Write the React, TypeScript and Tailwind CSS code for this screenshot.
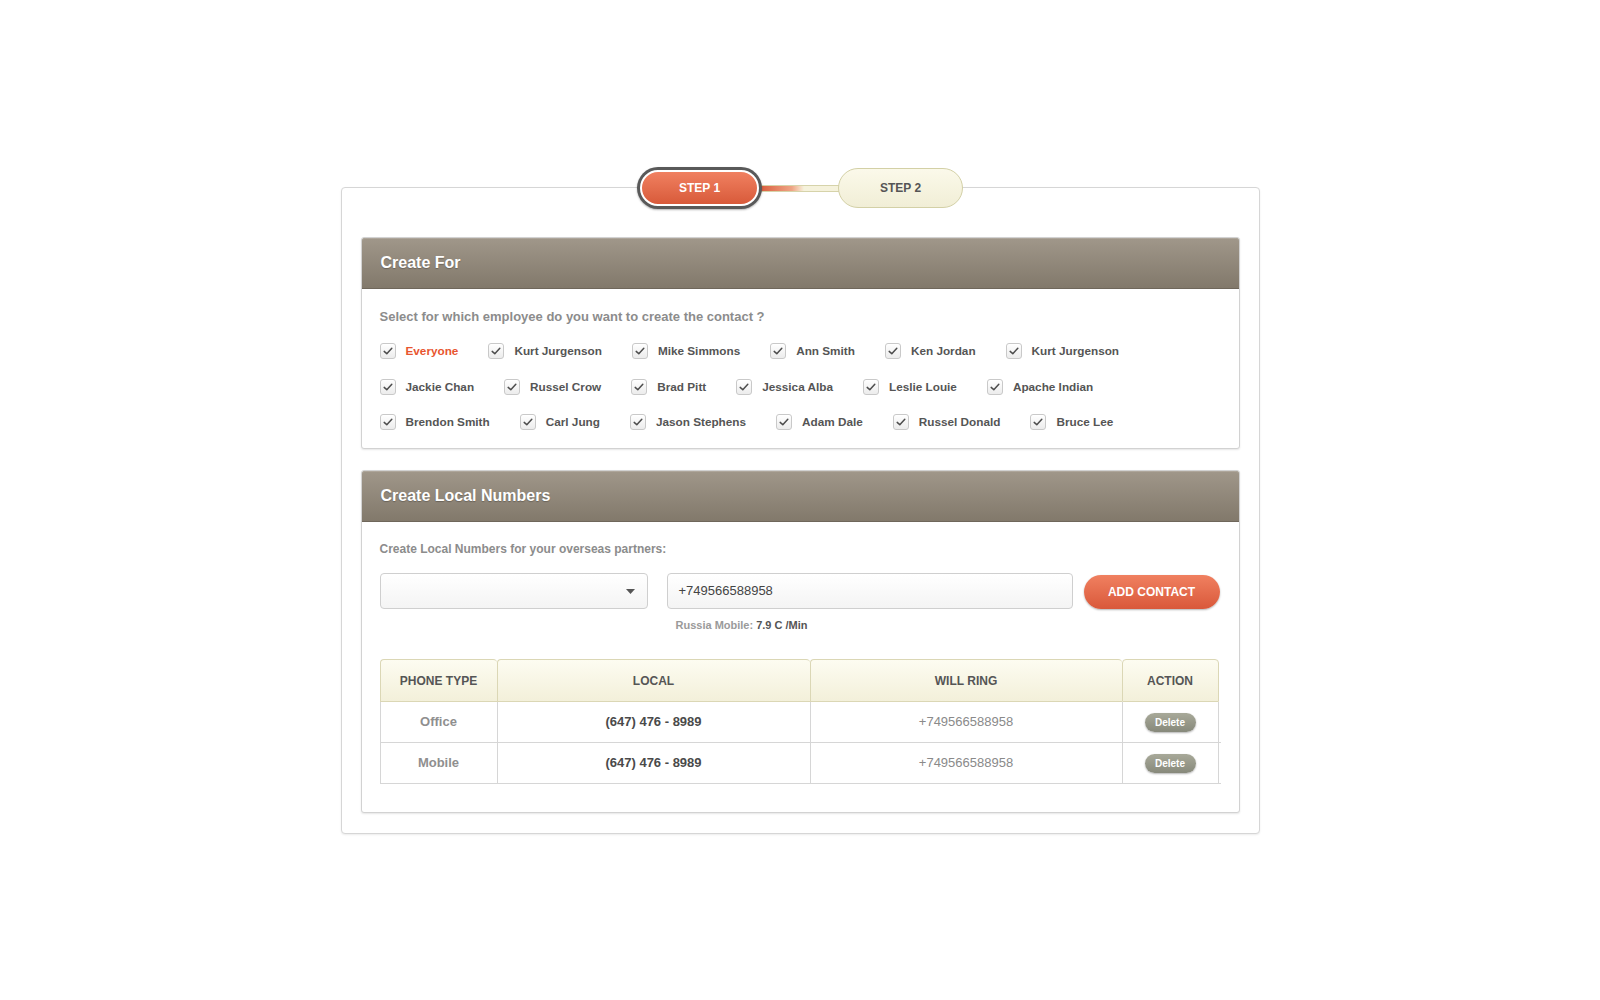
const rows = [
  ['Everyone', 'Kurt Jurgenson', 'Mike Simmons', 'Ann Smith', 'Ken Jordan', 'Kurt Jurgenson'],
  ['Jackie Chan', 'Russel Crow', 'Brad Pitt', 'Jessica Alba', 'Leslie Louie', 'Apache Indian'],
  ['Brendon Smith', 'Carl Jung', 'Jason Stephens', 'Adam Dale', 'Russel Donald', 'Bruce Lee'],
];

const numbers = [
  { type: 'Office', local: '(647) 476 - 8989', ring: '+749566588958' },
  { type: 'Mobile', local: '(647) 476 - 8989', ring: '+749566588958' },
];

function Check() {
  return (
    <span className="flex h-4 w-4 items-center justify-center rounded-[3px] border border-[#c9c9c9] bg-gradient-to-b from-white to-[#ececec] shadow-[inset_0_1px_0_#fff]">
      <svg width="12" height="12" viewBox="0 0 12 12" fill="none">
        <path d="M2.2 6.4 L4.8 8.8 L9.8 3.2" stroke="#4d4d4d" strokeWidth="1.5" strokeLinecap="round" strokeLinejoin="round" />
      </svg>
    </span>
  );
}

function PanelHeader({ title }: { title: string }) {
  return (
    <div className="flex h-[51px] items-center rounded-t-[3px] border-b border-[#6f675b] bg-[#8f8676] bg-gradient-to-b from-[#a0978a] to-[#82796b] px-[19px] shadow-[inset_0_1px_0_rgba(255,255,255,0.15)]">
      <h3 className="text-[16px] font-bold text-white [text-shadow:0_1px_1px_rgba(0,0,0,0.25)]">{title}</h3>
    </div>
  );
}

function Steps() {
  return (
    <div className="absolute left-1/2 top-[-21px] flex -translate-x-1/2 items-center">
      <div className="z-10 h-[42px] w-[125px] rounded-full bg-[#595959] p-[3px] shadow-[0_1px_2px_rgba(0,0,0,0.3)]">
        <div className="flex h-full w-full items-center justify-center rounded-full border-2 border-white bg-gradient-to-b from-[#f08060] to-[#d85a3a] text-[12px] font-bold text-white">
          STEP 1
        </div>
      </div>
      <div className="-mx-[2px] h-[7px] w-[80px] border-y border-[#d6d3aa] bg-gradient-to-r from-[#d95b3b] via-[#eea585] via-40% to-[#f5f2dc] to-55%" />
      <div className="z-10 flex h-[40px] w-[125px] items-center justify-center rounded-full border border-[#d3d0a6] bg-gradient-to-b from-[#fbf9ea] to-[#f1eed6] text-[12px] font-bold text-[#555]">
        STEP 2
      </div>
    </div>
  );
}

export default function App() {
  return (
    <div className="min-h-[1000px] bg-white pt-[187px] font-['Liberation_Sans',Arial,sans-serif]">
      <div className="relative mx-auto w-[919px] rounded-[4px] border border-[#d6d6d6] bg-white px-[19px] pb-[20px] pt-[49px] shadow-[0_1px_2px_rgba(0,0,0,0.08)]">
        <Steps />

        {/* employees */}
        <section className="rounded-[3px] border border-[#d2d2d2] bg-white shadow-[0_1px_2px_rgba(0,0,0,0.1)]">
          <PanelHeader title="Create For" />
          <div className="px-[18px] pb-[18px] pt-[20px]">
            <p className="text-[13px] leading-4 font-bold text-[#8c8c8c]">
              Select for which employee do you want to create the contact ?
            </p>
            <div className="mt-[18px] flex flex-col gap-[19.5px]">
              {rows.map((row, i) => (
                <div key={i} className="flex h-4 items-center gap-[30px]">
                  {row.map((name, j) => (
                    <label key={name + j} className="flex items-center gap-[10px]">
                      <Check />
                      <span
                        className={
                          'text-[11.75px] font-bold ' + (i === 0 && j === 0 ? 'text-[#e8552f]' : 'text-[#555]')
                        }
                      >
                        {name}
                      </span>
                    </label>
                  ))}
                </div>
              ))}
            </div>
          </div>
        </section>

        {/* local numbers */}
        <section className="mt-[21px] rounded-[3px] border border-[#d2d2d2] bg-white shadow-[0_1px_2px_rgba(0,0,0,0.1)]">
          <PanelHeader title="Create Local Numbers" />
          <div className="px-[18px] pb-[28px] pt-[19px]">
            <p className="text-[12px] leading-4 font-bold text-[#8c8c8c]">
              Create Local Numbers for your overseas partners:
            </p>
            <div className="mt-4 flex items-start">
              <div className="flex h-[36px] w-[268px] items-center justify-end rounded-[4px] border border-[#cfcfcf] bg-gradient-to-b from-white to-[#f4f4f4] pr-[12px]">
                <svg width="9" height="5" viewBox="0 0 9 5">
                  <path d="M0 0 H9 L4.5 5 Z" fill="#555" />
                </svg>
              </div>
              <div className="ml-[19px] w-[406px]">
                <div className="flex h-[36px] items-center rounded-[4px] border border-[#cfcfcf] bg-gradient-to-b from-white to-[#f4f4f4] px-[11px] text-[13px] text-[#444]">
                  +749566588958
                </div>
                <p className="mt-[9px] pl-[9px] text-[11px] leading-[14px] font-bold text-[#9a9a9a]">
                  Russia Mobile: <span className="text-[#555]">7.9 C /Min</span>
                </p>
              </div>
              <button className="ml-[11px] mt-[2px] h-[34px] w-[136px] rounded-full bg-gradient-to-b from-[#f08060] to-[#d9583a] text-[12px] font-bold text-white shadow-[0_1px_2px_rgba(0,0,0,0.3)]">
                ADD CONTACT
              </button>
            </div>

            <div className="mt-[27px]">
              <div className="grid grid-cols-[117px_313px_312px_97px] text-[12px] font-bold text-[#555]">
                {['PHONE TYPE', 'LOCAL', 'WILL RING', 'ACTION'].map((h, i) => (
                  <div
                    key={h}
                    className={
                      'flex h-[43px] items-center justify-center rounded-t-[4px] border-y border-l border-[#dbd7b5] bg-gradient-to-b from-[#fdfcf1] to-[#f3f0da] ' +
                      (i === 3 ? 'border-r' : '')
                    }
                  >
                    {h}
                  </div>
                ))}
              </div>
              {numbers.map((n) => (
                <div
                  key={n.type}
                  className="grid h-[41px] grid-cols-[117px_313px_312px_97px] border-b border-[#d6d6d6] text-[13px]"
                >
                  <div className="flex items-center justify-center border-l border-[#d6d6d6] font-bold text-[#8f8f8f]">
                    {n.type}
                  </div>
                  <div className="flex items-center justify-center border-l border-[#d6d6d6] font-bold text-[#4a4a4a]">
                    {n.local}
                  </div>
                  <div className="flex items-center justify-center border-l border-[#d6d6d6] text-[#8a8a8a]">
                    {n.ring}
                  </div>
                  <div className="flex items-center justify-center border-x border-[#d6d6d6]">
                    <button className="h-[19px] w-[51px] rounded-full bg-gradient-to-b from-[#a8a999] to-[#87897b] text-[10px] font-bold text-white shadow-[0_1px_2px_rgba(0,0,0,0.3)]">
                      Delete
                    </button>
                  </div>
                </div>
              ))}
            </div>
          </div>
        </section>
      </div>
    </div>
  );
}
